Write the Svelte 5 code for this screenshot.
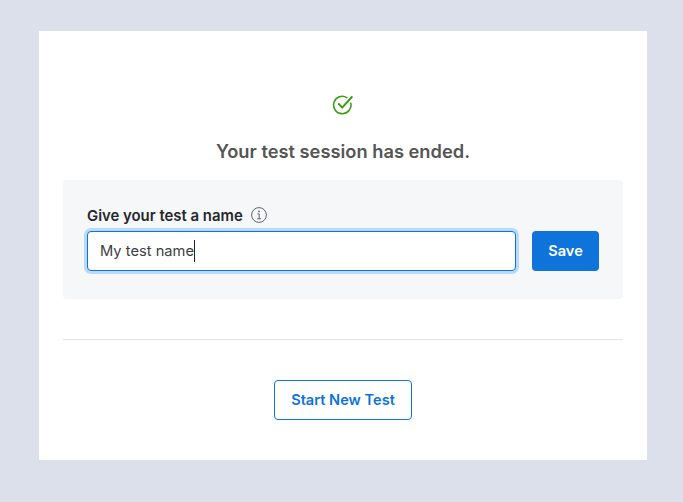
<script lang="ts">
  let testName = 'My test name';
</script>

<main class="page">
  <section class="card">
    <div class="status">
      <svg class="check" width="22" height="22" viewBox="0 0 22 22" fill="none" aria-hidden="true">
        <path d="M18.8 9.2a8.7 8.7 0 1 1-3.9-5.6" stroke="#3f9c1c" stroke-width="1.6" stroke-linecap="round" />
        <path d="M6.8 10l3.4 3.6L19.8 3" stroke="#3f9c1c" stroke-width="2" stroke-linecap="round" stroke-linejoin="round" />
      </svg>
      <h1>Your test session has ended.</h1>
    </div>

    <div class="panel">
      <div class="label-row">
        <span class="label">Give your test a name</span>
        <svg width="16" height="16" viewBox="0 0 16 16" fill="none" aria-hidden="true">
          <circle cx="8" cy="8" r="7.4" stroke="#5f6368" stroke-width="1" />
          <circle cx="8" cy="4.4" r="0.9" fill="#5f6368" />
          <path d="M6.4 6.9H8.2V11.6M6.2 11.8H10" stroke="#5f6368" stroke-width="1" />
        </svg>
      </div>
      <div class="form-row">
        <div class="input"><span class="value">{testName}</span><i class="caret"></i></div>
        <button class="save">Save</button>
      </div>
    </div>

    <hr />

    <div class="actions">
      <button class="start">Start New Test</button>
    </div>
  </section>
</main>

<style>
  :global(body) {
    margin: 0;
    background: #dce0eb;
    font-family: Inter, "Open Sans", sans-serif;
  }

  .page {
    padding: 31px 36px 42px 39px;
  }

  .card {
    background: #fff;
    padding: 63px 24px 40px;
    height: 429px;
    box-sizing: border-box;
  }

  .status {
    display: flex;
    flex-direction: column;
    align-items: center;
  }

  .check {
    display: block;
  }

  h1 {
    margin: 22px 0 0;
    font-size: 18.3px;
    line-height: 26px;
    font-weight: 600;
    color: #555;
  }

  .panel {
    margin-top: 16px;
    height: 119px;
    box-sizing: border-box;
    padding: 27px 24px 0;
    background: #f6f7f9;
    border-radius: 4px;
  }

  .label-row {
    display: flex;
    align-items: center;
    gap: 8px;
    height: 16px;
  }

  .label {
    font-size: 14.9px;
    line-height: 18px;
    padding-top: 1px;
    font-weight: 600;
    color: #25272b;
  }

  .form-row {
    display: flex;
    gap: 16px;
    margin-top: 8px;
  }

  .input {
    flex: 0 0 429px;
    height: 40px;
    box-sizing: border-box;
    display: flex;
    align-items: center;
    padding: 0 12px;
    background: #fff;
    border: 1px solid #0e73db;
    border-radius: 4px;
    box-shadow: 0 0 0 3px #b9dafa;
    font-size: 14.7px;
    color: #3c3f44;
  }

  .value {
    margin-bottom: 1px;
  }

  .caret {
    width: 1px;
    height: 22px;
    background: #222;
  }

  button {
    font-family: inherit;
    font-size: 14.6px;
    font-weight: 600;
    border-radius: 4px;
    height: 40px;
  }

  .save {
    width: 67px;
    background: #0e73db;
    color: #fff;
    border: none;
  }

  hr {
    margin: 40px 0 0;
    border: none;
    border-top: 1px solid #e2e3e6;
  }

  .actions {
    display: flex;
    justify-content: center;
    margin-top: 40px;
  }

  .start {
    width: 138px;
    background: #fff;
    color: #0e73db;
    border: 1px solid #0e73db;
  }
</style>
